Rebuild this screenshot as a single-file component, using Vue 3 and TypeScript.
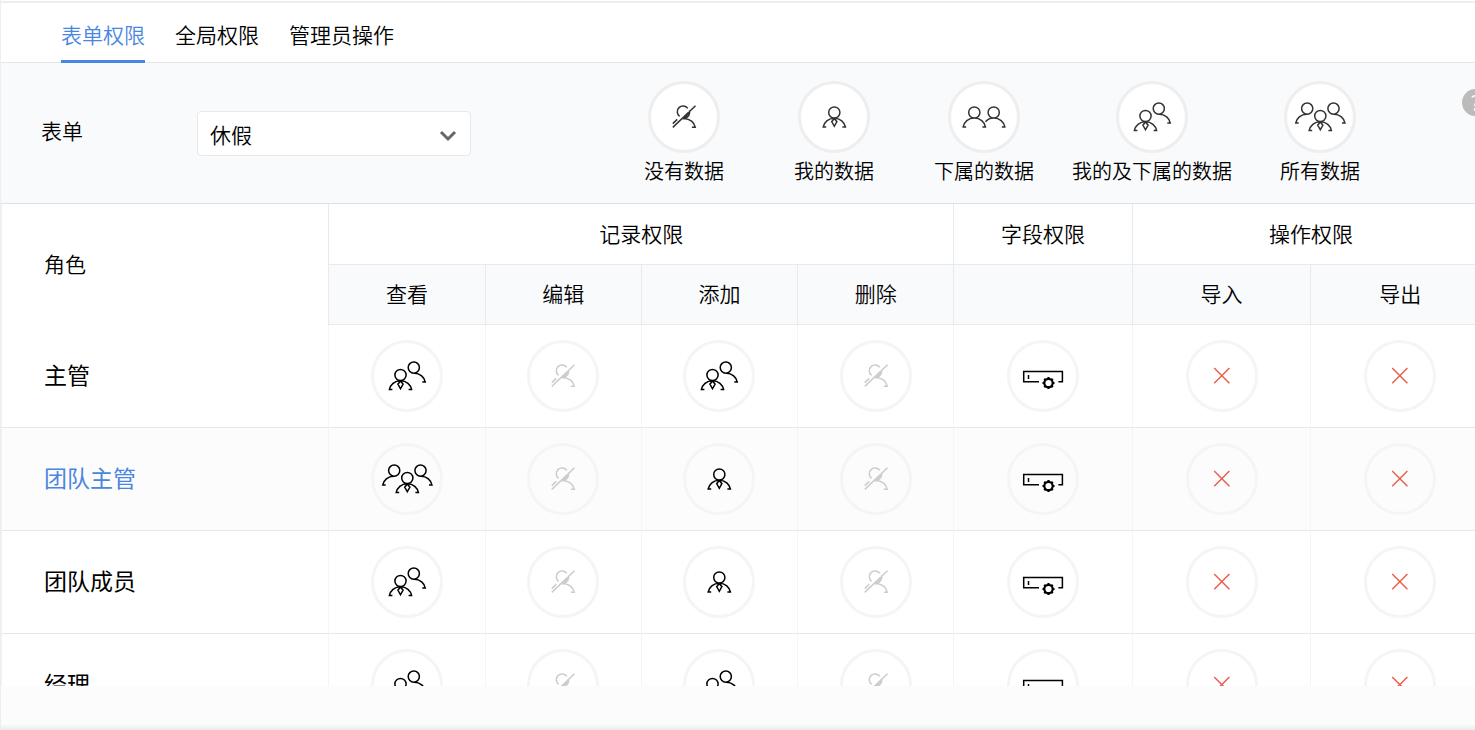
<script setup lang="ts">
import { computed, defineComponent, h, ref } from 'vue'

type Scope = 'none' | 'mine' | 'sub' | 'mineSub' | 'all' | 'field' | 'deny'

interface Role {
  name: string
  scopes: Scope[]
}

const tabs: string[] = ['表单权限', '全局权限', '管理员操作']
const activeTab = ref<string>(tabs[0])
const form = ref<string>('休假')

const legend: { scope: Scope; label: string }[] = [
  { scope: 'none', label: '没有数据' },
  { scope: 'mine', label: '我的数据' },
  { scope: 'sub', label: '下属的数据' },
  { scope: 'mineSub', label: '我的及下属的数据' },
  { scope: 'all', label: '所有数据' },
]

const columns: string[] = ['查看', '编辑', '添加', '删除', '', '导入', '导出']

const roles: Role[] = [
  { name: '主管', scopes: ['mineSub', 'none', 'mineSub', 'none', 'field', 'deny', 'deny'] },
  { name: '团队主管', scopes: ['all', 'none', 'mine', 'none', 'field', 'deny', 'deny'] },
  { name: '团队成员', scopes: ['mineSub', 'none', 'mine', 'none', 'field', 'deny', 'deny'] },
  { name: '经理', scopes: ['mineSub', 'none', 'mineSub', 'none', 'field', 'deny', 'deny'] },
]
const currentRole = ref<string>('团队主管')

const head = (x: number, y: number): string =>
  `M${x - 5.6} ${y}a5.6 5.6 0 1 0 11.2 0a5.6 5.6 0 1 0 -11.2 0z`
const rightArm = (x: number, y: number): string => `M${x} ${y}c6 0 10.2 4 11.1 8.8h-3`
const leftArm = (x: number, y: number): string => `M${x} ${y}c-6 0 -10.2 4 -11.1 8.8h3`
const tie = (x: number, y: number): string => `M${x} ${y}l-2.6 3.2l2.6 4.6l2.6 -4.6z`
const leader = (x: number, y: number): string =>
  head(x, y) + leftArm(x, y + 5.7) + rightArm(x, y + 5.7) + tie(x, y + 6)

const gearTeeth = Array.from({ length: 8 }, (_, i) => {
  const a = (i * Math.PI) / 4
  const p = (r: number) => `${(41.5 + r * Math.cos(a)).toFixed(2)} ${(43 + r * Math.sin(a)).toFixed(2)}`
  return `M${p(4.6)}L${p(6)}`
}).join('')

const paths: Record<Scope, string> = {
  none:
    'M31.6 35.4A5.8 5.8 0 1 1 39.8 27.4M41.3 29.6C42.4 32.8 40.6 36.6 36.4 37.4L41 31.6' +
    'M36.2 37.4c5.8 .4 10.2 4 11.1 8.9h-3.4M24.8 46.4L47.5 24.8M24.8 42.6L29.2 38.4',
  mine: leader(36.3, 31.5),
  sub: head(26.3, 31.5) + leftArm(26.3, 37.1) + rightArm(26.3, 37.1) + head(45.7, 31.5) + rightArm(45.7, 37.1) + 'M45.7 37.1c-3.4 0 -6.2 1.4 -8.2 3.6',
  mineSub: leader(29.5, 35) + head(42.8, 27.6) + rightArm(43.2, 33.3),
  all: leader(36.3, 35) + head(23.2, 27.6) + leftArm(22.8, 33.3) + head(49.5, 27.6) + rightArm(49.9, 33.3),
  field: 'M32 41.7H16.7V31.4H55.4V41.7H51.4M21.5 35V39',
  deny: 'M28.2 28L43.4 43.2M43.4 28L28.2 43.2',
}

const names: Record<Scope, string> = {
  none: '没有数据',
  mine: '我的数据',
  sub: '下属的数据',
  mineSub: '我的及下属的数据',
  all: '所有数据',
  field: '字段权限设置',
  deny: '不允许',
}

const ScopeIcon = defineComponent({
  props: { scope: { type: String, required: true } },
  setup(props) {
    const d = computed(() => paths[props.scope as Scope])
    return () =>
      h('svg', { viewBox: '0 0 72 72', width: 72, height: 72, fill: 'none', stroke: 'currentColor', 'stroke-width': 1.5, 'aria-hidden': 'true' }, [
        h('path', { d: d.value }),
        props.scope === 'field'
          ? h('g', { 'stroke-width': 2.2 }, [h('circle', { cx: 41.5, cy: 43, r: 4.2 }), h('path', { d: gearTeeth })])
          : null,
      ])
  },
})
</script>

<template>
  <div class="page">
    <nav class="tabs">
      <button
        v-for="tab in tabs"
        :key="tab"
        type="button"
        class="tab"
        :class="{ active: tab === activeTab }"
        @click="activeTab = tab"
      >{{ tab }}</button>
    </nav>

    <div class="wide filter">
      <label class="filter-label" for="form-select">表单</label>
      <div class="select-box">
        <select id="form-select" v-model="form">
          <option>休假</option>
        </select>
        <svg class="chevron" viewBox="0 0 18 12" width="18" height="12" aria-hidden="true">
          <path d="M2 2L9 9L16 2" fill="none" stroke="#666" stroke-width="3" />
        </svg>
      </div>
      <ul class="legend">
        <li v-for="item in legend" :key="item.scope">
          <span class="disc"><ScopeIcon :scope="item.scope" /></span>
          <span class="legend-text">{{ item.label }}</span>
        </li>
      </ul>
      <button type="button" class="help">?</button>
    </div>

    <div class="table-area">
      <table class="wide">
        <colgroup>
          <col class="c-role" />
          <col v-for="n in 4" :key="'r' + n" class="c-record" />
          <col v-for="n in 3" :key="'o' + n" class="c-other" />
        </colgroup>
        <thead>
          <tr>
            <th rowspan="2" class="role-head">角色</th>
            <th colspan="4">记录权限</th>
            <th>字段权限</th>
            <th colspan="2">操作权限</th>
          </tr>
          <tr class="sub-head">
            <th v-for="(c, i) in columns" :key="i">{{ c }}</th>
          </tr>
        </thead>
        <tbody>
          <tr v-for="role in roles" :key="role.name" :class="{ current: role.name === currentRole }" @mouseenter="currentRole = role.name">
            <th scope="row">{{ role.name }}</th>
            <td v-for="(s, i) in role.scopes" :key="i">
              <button type="button" class="disc" :class="s" :aria-label="names[s]"><ScopeIcon :scope="s" /></button>
            </td>
          </tr>
        </tbody>
      </table>
    </div>
    <footer class="bottom"></footer>
  </div>
</template>

<style>
body {
  margin: 0;
  background: #fff;
}
</style>

<style scoped>
.page {
  box-sizing: border-box;
  display: flex;
  flex-direction: column;
  height: 100vh;
  padding-top: 1px;
  border-left: 1px solid #eee;
  overflow: hidden;
  color: #000;
  font-family: 'Noto Sans CJK SC', sans-serif;
  font-size: 21px;
  font-weight: 350;
}

button,
select {
  font: inherit;
  color: inherit;
}

.wide {
  width: calc(100% + 14px);
}

.tabs {
  display: flex;
  flex: none;
  gap: 30px;
  height: 59px;
  padding-left: 60px;
  border-top: 2px solid #eee;
  border-bottom: 1px solid #e6e6e6;
}

.tab {
  height: 60px;
  padding: 1px 0 0;
  border: 0;
  border-top: 3px solid transparent;
  border-bottom: 3px solid transparent;
  background: none;
  line-height: 30px;
  cursor: pointer;
}

.tab.active {
  color: #4a86e0;
  border-bottom-color: #4a86e0;
}

.filter {
  box-sizing: border-box;
  display: flex;
  flex: none;
  align-items: center;
  height: 141px;
  padding-left: 40px;
  border-bottom: 1px solid #dfe1e4;
  background: #f9fafc;
}

.filter-label {
  width: 156px;
  padding-bottom: 6px;
}

.select-box {
  display: grid;
  align-items: center;
  width: 274px;
}

.select-box select {
  grid-area: 1 / 1;
  box-sizing: border-box;
  width: 100%;
  height: 45px;
  padding: 2px 12px 0;
  border: 1px solid #e6e8ea;
  border-radius: 4px;
  background: #fff;
  appearance: none;
}

.chevron {
  grid-area: 1 / 1;
  justify-self: end;
  margin: 5px 14px 0 0;
  pointer-events: none;
}

.legend {
  display: flex;
  gap: 26px;
  margin: 0 80px 0 auto;
  padding: 18px 0 14px;
  list-style: none;
  font-size: 20px;
}

.legend li {
  display: flex;
  flex-direction: column;
  align-items: center;
  min-width: 124px;
}

.legend-text {
  line-height: 36px;
  white-space: nowrap;
}

.disc {
  box-sizing: border-box;
  display: inline-flex;
  align-items: center;
  justify-content: center;
  width: 72px;
  height: 72px;
  padding: 0;
  border: 3px solid #eee;
  border-radius: 50%;
  background: #fff;
  color: #333;
}

.disc svg {
  flex: none;
}

.help {
  align-self: flex-start;
  flex: none;
  width: 27px;
  height: 27px;
  margin-top: 26px;
  padding: 0;
  border: 0;
  border-radius: 50%;
  background: #bbb;
  color: #fff;
  font-weight: 400;
  line-height: 27px;
}

.table-area {
  flex: 1;
  min-height: 0;
  overflow: hidden;
}

table {
  table-layout: fixed;
  border-collapse: separate;
  border-spacing: 0;
}

.c-role {
  width: 22%;
}

.c-record {
  width: 10.5%;
}

.c-other {
  width: 12%;
}

th,
td {
  box-sizing: border-box;
  padding: 0;
  text-align: center;
  font-weight: 350;
}

thead th {
  height: 61px;
  padding-bottom: 2px;
  border-left: 1px solid #e8eaf0;
  border-bottom: 1px solid #e8eaf0;
}

.sub-head th {
  height: 60px;
  padding-bottom: 4px;
  background: #f9fafc;
}

thead .role-head,
tbody th {
  padding: 0 0 4px 42px;
  border-left: 1px solid #f2f2f2;
  text-align: left;
}

thead .role-head {
  border-bottom: 0;
}

tbody th,
tbody td {
  height: 103px;
  border-bottom: 1px solid #e8e8e8;
}

tbody th {
  font-size: 23px;
  font-weight: 400;
}

tbody td {
  border-left: 1px solid #f5f5f5;
  line-height: 0;
}

tbody .current {
  background: #fcfcfc;
}

.current th {
  color: #4a86e0;
}

tbody .disc {
  border-color: #f5f5f5;
  background: transparent;
  color: #000;
  cursor: pointer;
}

tbody .disc.none {
  color: #ccc;
}

tbody .disc.deny {
  color: #e8604f;
}

.bottom {
  flex: none;
  height: 44px;
  background: linear-gradient(#fcfcfc 38px, #ebebeb);
}
</style>
